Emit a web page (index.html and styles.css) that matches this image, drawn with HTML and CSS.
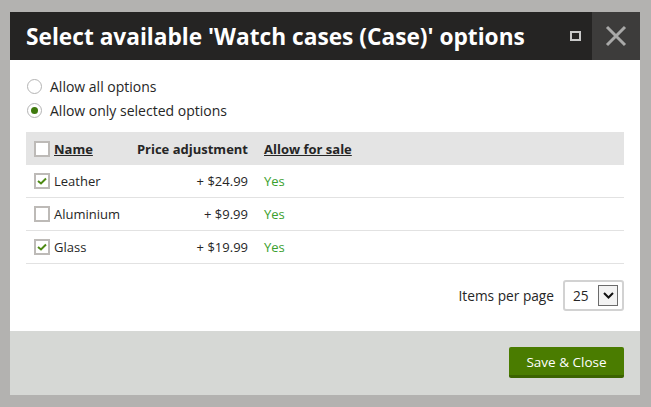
FILE: index.html
```html
<!DOCTYPE html>
<html>
<head>
<meta charset="utf-8">
<link rel="stylesheet" href="styles.css">
</head>
<body>
<div class="dialog">
  <div class="header">
    <h1 class="title">Select available 'Watch cases (Case)' options</h1>
    <div class="header-tools">
      <span class="maximize"></span>
      <button class="close" aria-label="Close">
        <svg width="22" height="22" viewBox="0 0 22 22"><path d="M2 2 L20 20 M20 2 L2 20" stroke="#a9a9a8" stroke-width="3" fill="none"/></svg>
      </button>
    </div>
  </div>
  <div class="content">
    <div class="radios">
      <label class="radio-row"><span class="radio"></span>Allow all options</label>
      <label class="radio-row"><span class="radio checked"></span>Allow only selected options</label>
    </div>
    <div class="grid">
      <div class="row head">
        <div class="cell name"><span class="check"></span><span class="link">Name</span></div>
        <div class="cell price">Price adjustment</div>
        <div class="cell sale"><span class="link">Allow for sale</span></div>
      </div>
      <div class="row">
        <div class="cell name"><span class="check on"><svg width="10" height="8" viewBox="0 0 10 8"><path d="M1 4 L4 6.5 L9 1.5" stroke="#4e8a14" stroke-width="2" fill="none"/></svg></span>Leather</div>
        <div class="cell price">+ $24.99</div>
        <div class="cell sale yes">Yes</div>
      </div>
      <div class="row">
        <div class="cell name"><span class="check"></span>Aluminium</div>
        <div class="cell price">+ $9.99</div>
        <div class="cell sale yes">Yes</div>
      </div>
      <div class="row">
        <div class="cell name"><span class="check on"><svg width="10" height="8" viewBox="0 0 10 8"><path d="M1 4 L4 6.5 L9 1.5" stroke="#4e8a14" stroke-width="2" fill="none"/></svg></span>Glass</div>
        <div class="cell price">+ $19.99</div>
        <div class="cell sale yes">Yes</div>
      </div>
    </div>
    <div class="pager">
      <span class="pager-label">Items per page</span>
      <div class="select">
        <span class="select-value">25</span>
        <span class="select-btn"><svg width="11" height="7" viewBox="0 0 11 7"><path d="M1 1 L5.5 5.5 L10 1" stroke="#111" stroke-width="2" fill="none"/></svg></span>
      </div>
    </div>
  </div>
  <div class="footer">
    <button class="save">Save &amp; Close</button>
  </div>
</div>
</body>
</html>
```

FILE: styles.css
```css
* { box-sizing: border-box; }
html, body { margin: 0; padding: 0; }
body {
  background: #b3b2b0;
  padding: 12px 11px 12px 10px;
  font-family: "Open Sans", "Noto Sans", sans-serif;
  font-size: 13px;
  color: #262626;
}
.dialog {
  width: 630px;
  display: flex;
  flex-direction: column;
}
.header {
  height: 48px;
  background: #252423;
  display: flex;
  align-items: center;
  justify-content: space-between;
}
.title {
  margin: 0 0 0 16px;
  font-size: 22.7px;
  font-weight: 700;
  color: #fff;
  white-space: nowrap;
}
.header-tools {
  display: flex;
  align-items: center;
  height: 100%;
}
.maximize {
  width: 11px;
  height: 10px;
  border: 2px solid #c9c9c9;
  margin-right: 11px;
}
.close {
  width: 48px;
  height: 48px;
  border: 0;
  padding: 0;
  background: #3d3c3b;
  display: flex;
  align-items: center;
  justify-content: center;
}
.content {
  background: #fff;
  padding: 14px 16px 20px 16px;
}
.radios {
  display: flex;
  flex-direction: column;
  padding-left: 1px;
  margin-bottom: 10px;
  font-size: 14px;
}
.radio-row {
  height: 24px;
  display: flex;
  align-items: center;
  gap: 8px;
}
.radio {
  width: 15px;
  height: 15px;
  border: 1.5px solid #b4b4b4;
  border-radius: 50%;
  background: #fff;
  display: flex;
  align-items: center;
  justify-content: center;
}
.radio.checked::after {
  content: "";
  width: 7px;
  height: 7px;
  border-radius: 50%;
  background: #3f7a0d;
}
.row {
  display: grid;
  grid-template-columns: 103px 127px 1fr;
  height: 33px;
  align-items: center;
  border-bottom: 1px solid #e2e2e2;
}
.row.head {
  background: #e4e4e4;
  font-weight: 700;
  border-bottom: 0;
}
.cell { white-space: nowrap; }
.cell.name {
  display: flex;
  align-items: center;
  gap: 4px;
  padding-left: 8px;
}
.cell.price { text-align: right; padding-right: 8px; }
.cell.sale { padding-left: 8px; }
.link { text-decoration: underline; }
.yes { color: #3ba02e; }
.check {
  width: 16px;
  height: 16px;
  border: 2px solid #bdbab7;
  background: #fff;
  display: flex;
  align-items: center;
  justify-content: center;
}
.pager {
  display: flex;
  justify-content: flex-end;
  align-items: center;
  gap: 9px;
  margin-top: 16px;
  font-size: 13.7px;
}
.select {
  width: 61px;
  height: 31px;
  border: 2px solid #d2d2d2;
  border-radius: 3px;
  display: flex;
  align-items: center;
  justify-content: space-between;
  padding: 0 4px 0 8px;
}
.select-btn {
  width: 20px;
  height: 21px;
  border: 1px solid #6b6b6b;
  background: #f3f3f3;
  display: flex;
  align-items: center;
  justify-content: center;
}
.footer {
  height: 64px;
  background: #d6d8d5;
  display: flex;
  justify-content: flex-end;
  align-items: flex-start;
  padding: 16px 16px 0 0;
}
.save {
  width: 115px;
  height: 31px;
  border: 0;
  border-bottom: 3px solid #3b6300;
  border-radius: 2px;
  background: #4a7c00;
  color: #fff;
  font-family: "Open Sans", "Noto Sans", sans-serif;
  font-size: 13.5px;
  padding: 2px 0 0 0;
}
```
